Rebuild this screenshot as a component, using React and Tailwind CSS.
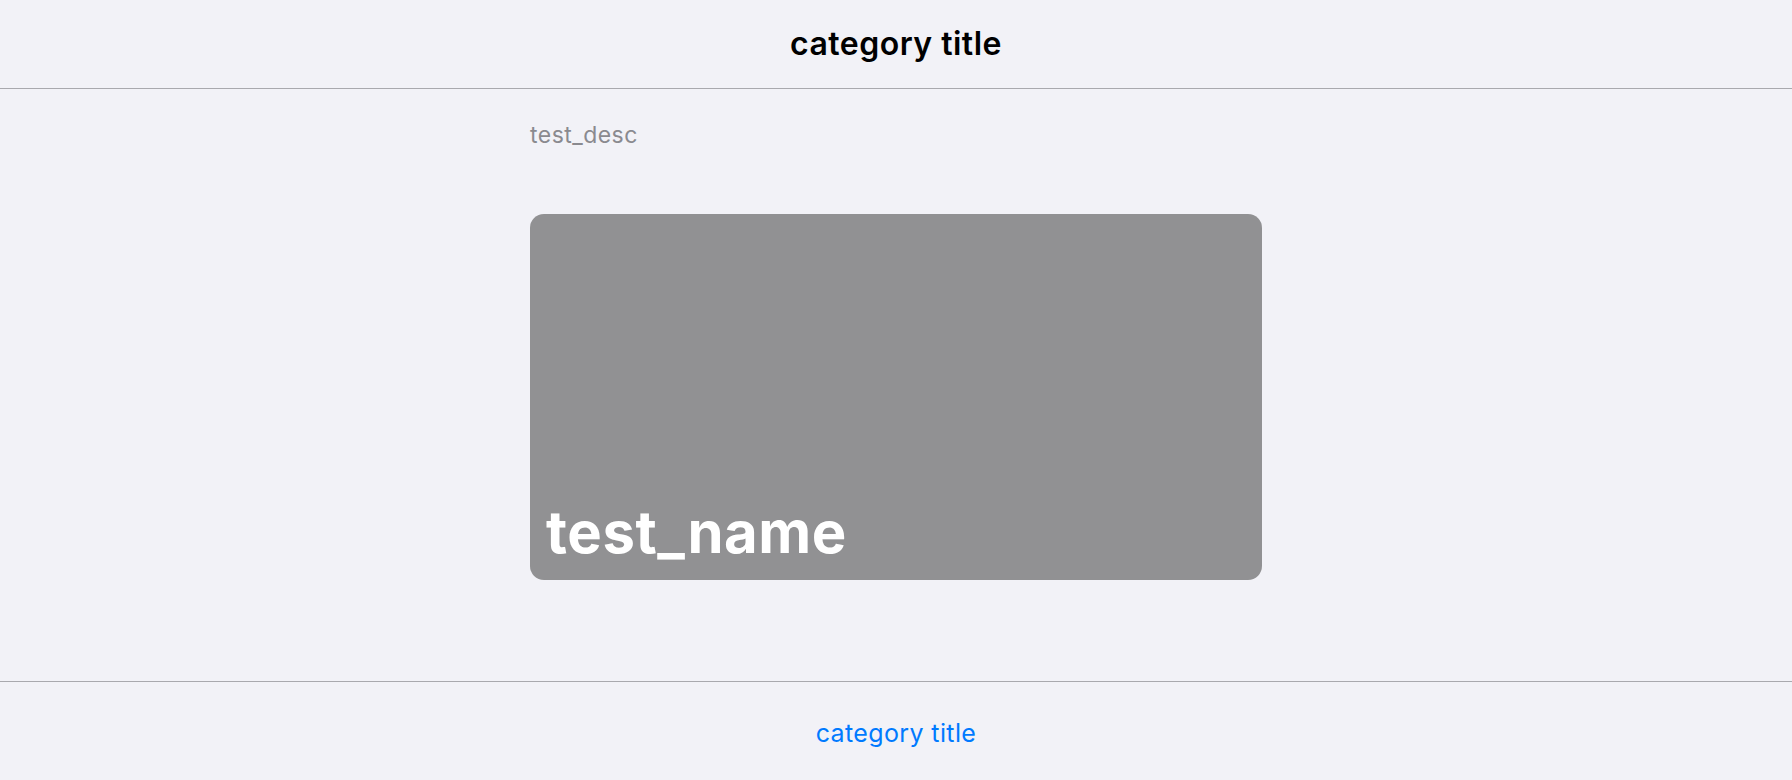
export default function App() {
  return (
    <div className="h-[780px] flex flex-col bg-[#f2f2f7] overflow-hidden" style={{ fontFamily: "Inter, 'Noto Sans', sans-serif" }}>
      {/* Header */}
      <header className="h-[89px] shrink-0 flex items-center justify-center border-b border-[#a9a9ae]">
        <h1 className="text-[32px] font-semibold text-black leading-none tracking-[0.015em]">category title</h1>
      </header>

      {/* Content */}
      <main className="flex-1">
        <div className="w-[732px] mx-auto pt-[31px]">
          <p className="text-[23px] leading-[30px] text-[#8a8a8f] tracking-[0.02em]">test_desc</p>
          <div className="mt-[64px] h-[366px] rounded-[14px] bg-[#919193] flex items-end px-4 pb-[19px]">
            <h2 className="text-[58px] font-bold text-white leading-none tracking-[0.01em]">test_name</h2>
          </div>
        </div>
      </main>

      {/* Footer */}
      <footer className="h-[99px] shrink-0 border-t border-[#a9a9ae] flex items-center justify-center pt-1">
        <a className="text-[25px] text-[#007aff] leading-none tracking-[0.015em]">category title</a>
      </footer>
    </div>
  );
}
